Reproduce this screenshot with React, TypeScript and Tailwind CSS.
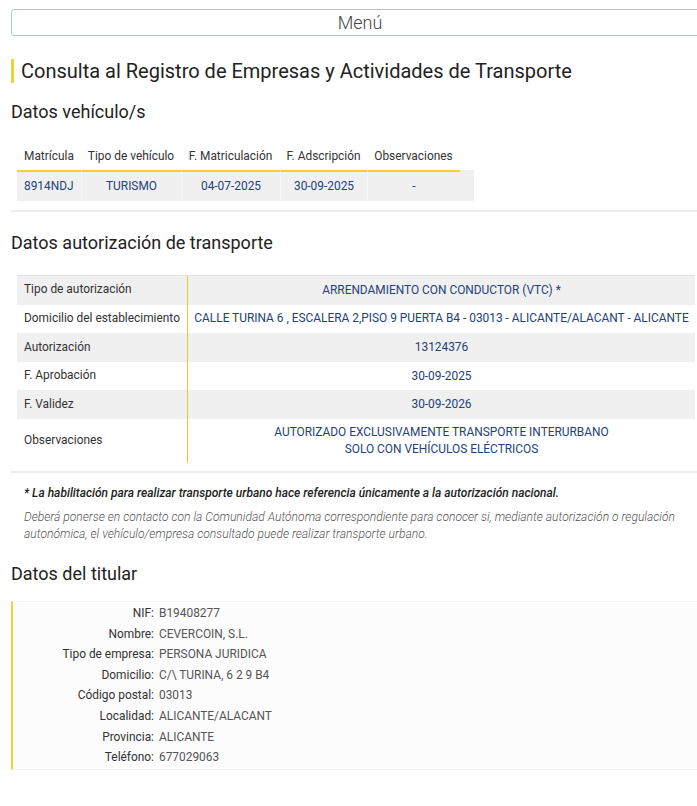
import React from 'react';

const vehiculoCols = ['Matrícula', 'Tipo de vehículo', 'F. Matriculación', 'F. Adscripción', 'Observaciones'];
const vehiculoRow = ['8914NDJ', 'TURISMO', '04-07-2025', '30-09-2025', '-'];

const autorizacion: [string, string[]][] = [
  ['Tipo de autorización', ['ARRENDAMIENTO CON CONDUCTOR (VTC) *']],
  ['Domicilio del establecimiento', ['CALLE TURINA 6 , ESCALERA 2,PISO 9 PUERTA B4 - 03013 - ALICANTE/ALACANT - ALICANTE']],
  ['Autorización', ['13124376']],
  ['F. Aprobación', ['30-09-2025']],
  ['F. Validez', ['30-09-2026']],
  ['Observaciones', ['AUTORIZADO EXCLUSIVAMENTE TRANSPORTE INTERURBANO', 'SOLO CON VEHÍCULOS ELÉCTRICOS']],
];

const titular: [string, string][] = [
  ['NIF', 'B19408277'],
  ['Nombre', 'CEVERCOIN, S.L.'],
  ['Tipo de empresa', 'PERSONA JURIDICA'],
  ['Domicilio', 'C/\\ TURINA, 6 2 9 B4'],
  ['Código postal', '03013'],
  ['Localidad', 'ALICANTE/ALACANT'],
  ['Provincia', 'ALICANTE'],
  ['Teléfono', '677029063'],
];

function SectionTitle({ children, className }: { children: React.ReactNode; className?: string }) {
  return <h2 className={`text-[18px] leading-[22px] text-[#222] font-normal ${className ?? ''}`}>{children}</h2>;
}

export default function App() {
  return (
    <div className="w-full overflow-hidden bg-white" style={{ fontFamily: 'Roboto, "Liberation Sans", sans-serif' }}>
      <div className="w-[720px] px-[11px] pb-[40px]">
        {/* menu */}
        <button className="mt-[9px] w-full h-[27px] border border-[#b3c3d8] rounded-[3px] bg-white text-[18px] font-light text-[#444] leading-[25px]">
          Menú
        </button>

        <h1 className="mt-[23px] border-l-[3px] border-[#f2cf3b] pl-[7px] text-[20px] leading-[24px] text-[#222] font-normal">
          Consulta al Registro de Empresas y Actividades de Transporte
        </h1>

        <SectionTitle className="mt-[18px]">Datos vehículo/s</SectionTitle>

        {/* vehicle table */}
        <div className="ml-[6px] mt-[20px] w-[457px] text-[11.9px]">
          <div className="grid grid-cols-[64px_100px_99px_87px_93px_14px] h-[27px] items-center text-[#333]">
            {vehiculoCols.map((c, i) => (
              <div key={c} className={i === 0 ? 'pl-[7px] whitespace-nowrap' : 'text-center whitespace-nowrap'}>
                {c}
              </div>
            ))}
            <div />
          </div>
          <div className="grid grid-cols-[64px_100px_99px_87px_93px_14px] h-[31px] bg-[#f0f0f0] text-[#22427a]">
            {vehiculoRow.map((v, i) => (
              <div
                key={i}
                className={`border-t-2 border-t-[#f2cf3b] flex items-center ${i === 0 ? 'pl-[7px]' : 'justify-center border-l border-l-[#f6f6f6]'}`}
              >
                {v}
              </div>
            ))}
            <div />
          </div>
        </div>

        <div className="mt-[9px] h-[2px] bg-[#ececec]" />

        <SectionTitle className="mt-[20px]">Datos autorización de transporte</SectionTitle>

        {/* authorization table */}
        <div className="ml-[6px] mt-[21px] w-[678px] border-t border-[#e4e4e4] text-[11.9px]">
          {autorizacion.map(([label, values], i) => (
            <div key={label} className={`flex ${i % 2 === 0 ? 'bg-[#f0f0f0]' : 'bg-white'}`}>
              <div className="w-[170px] shrink-0 pl-[7px] flex items-center text-[#333] whitespace-nowrap min-h-[28.6px]">
                {label}
              </div>
              <div className="flex-1 border-l border-l-[#eec62e] flex flex-col items-center justify-center text-center text-[#22427a] py-[5px] leading-[17px] whitespace-nowrap">
                {values.map((v) => (
                  <div key={v}>{v}</div>
                ))}
              </div>
            </div>
          ))}
        </div>

        <div className="mt-[8px] h-[2px] bg-[#ececec]" />

        <p className="mt-[12px] pl-[13px] text-[12px] leading-[17px] italic font-medium text-[#222]">
          * La habilitación para realizar transporte urbano hace referencia únicamente a la autorización nacional.
        </p>
        <p className="mt-[7px] pl-[13px] text-[12.1px] leading-[17px] italic font-light text-[#555]">
          Deberá ponerse en contacto con la Comunidad Autónoma correspondiente para conocer si, mediante autorización o regulación
          <br />
          autonómica, el vehículo/empresa consultado puede realizar transporte urbano.
        </p>

        <SectionTitle className="mt-[20px]">Datos del titular</SectionTitle>

        {/* titular */}
        <div className="mt-[16px] border-l-2 border-l-[#f2cf3b] border-y border-y-[#f3f3f3] bg-[#fcfcfc] py-[1px] text-[11.9px]">
          {titular.map(([k, v]) => (
            <div key={k} className="grid grid-cols-[141px_1fr] leading-[20.6px]">
              <div className="text-right text-[#333]">{k}:</div>
              <div className="pl-[5px] text-[#555]">{v}</div>
            </div>
          ))}
        </div>
      </div>
    </div>
  );
}
